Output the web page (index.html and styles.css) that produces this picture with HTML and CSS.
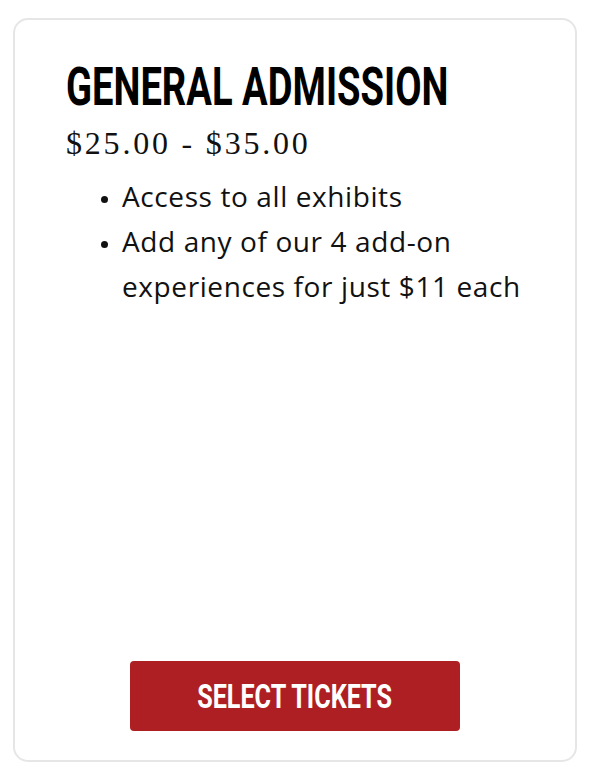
FILE: index.html
```html
<!DOCTYPE html>
<html lang="en">
<head>
    <meta charset="UTF-8">
    <meta name="viewport" content="width=device-width, initial-scale=1.0">
    <title>General Admission</title>
    <link rel="stylesheet" href="styles.css">
</head>
<body>
    <!-- ticket card -->
    <div class="ticket-card">
        <h2 class="ticket-title">General Admission</h2>
        <div class="ticket-price">$25.00 - $35.00</div>
        <ul class="ticket-perks">
            <li>Access to all exhibits</li>
            <li>Add any of our 4 add-on experiences for just $11 each</li>
        </ul>
        <a href="#" class="btn-select"><span class="btn-label">Select Tickets</span></a>
    </div>
</body>
</html>
```

FILE: styles.css
```css
* {
    box-sizing: border-box;
    margin: 0;
    padding: 0;
}
body {
    background: #fff;
    padding: 18px 13px;
    height: 780px;
    font-family: "Open Sans", Lato, sans-serif;
    color: #111;
}
.ticket-card {
    display: flex;
    flex-direction: column;
    height: 744px;
    border: 2px solid #e6e6e6;
    border-radius: 15px;
    padding: 41px 51px 29px;
}
/* condensed headline look */
.ticket-title {
    font-family: Roboto, "Liberation Sans", sans-serif;
    font-size: 53px;
    line-height: 53px;
    font-weight: 700;
    text-transform: uppercase;
    color: #000;
    white-space: nowrap;
    transform: scaleX(0.72);
    transform-origin: left center;
}
.ticket-price {
    font-family: "Liberation Serif", serif;
    font-size: 32px;
    letter-spacing: 2.8px;
    line-height: 40px;
    margin-top: 9px;
}
.ticket-perks {
    margin: 11px -20px 0 0;
    padding-left: 56px;
    font-size: 28px;
    letter-spacing: 0.6px;
    line-height: 45px;
}
.ticket-perks li::marker {
    font-size: 20px;
}
.btn-select {
    display: block;
    margin: auto auto 0;
    width: 330px;
    height: 70px;
    line-height: 70px;
    background: #ae1f24;
    border-radius: 4px;
    color: #fff;
    text-align: center;
    text-decoration: none;
}
.btn-label {
    display: inline-block;
    text-transform: uppercase;
    font-family: Roboto, "Liberation Sans", sans-serif;
    font-weight: 700;
    font-size: 34px;
    white-space: nowrap;
    transform: scaleX(0.74);
}
```
